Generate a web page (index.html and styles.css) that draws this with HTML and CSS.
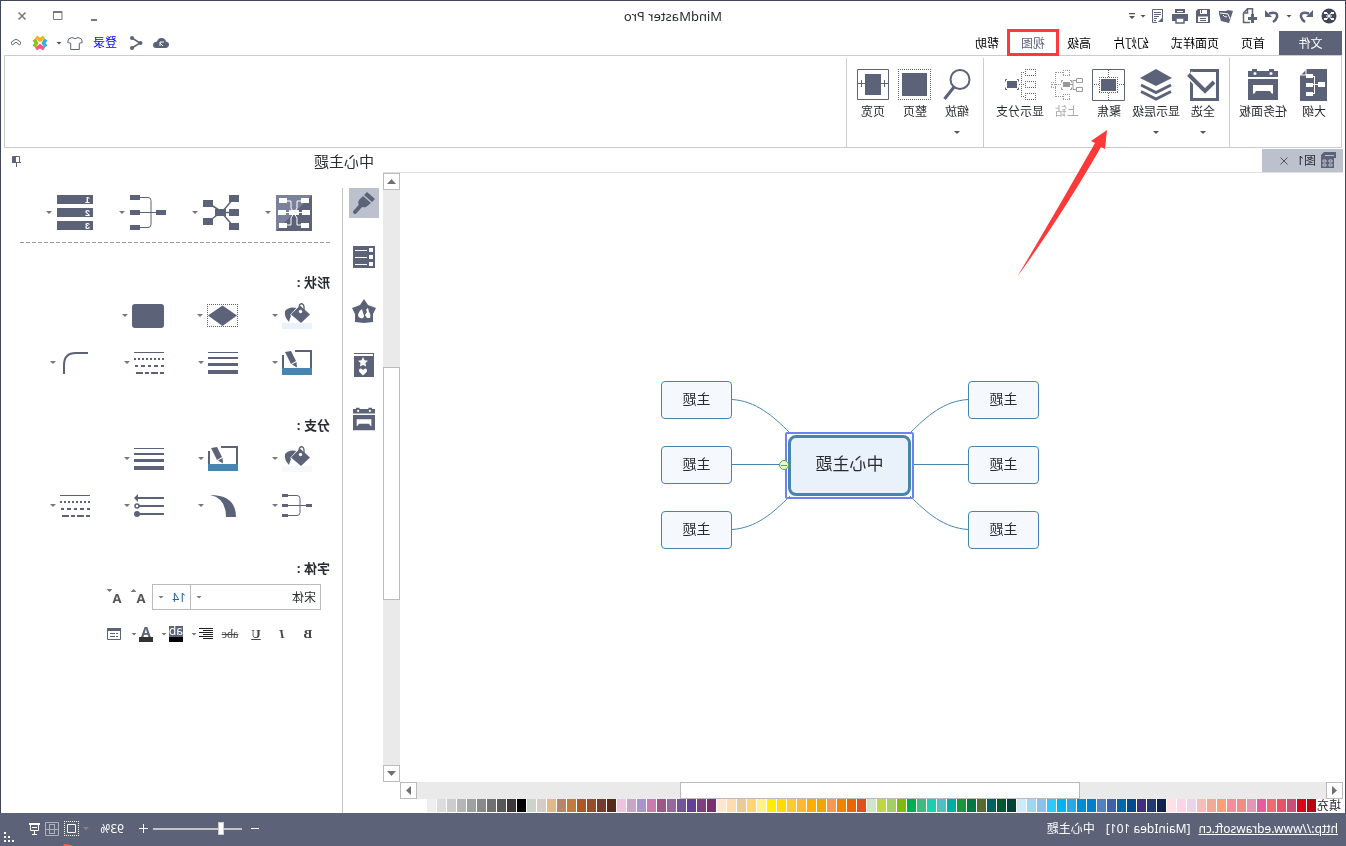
FILE: index.html
```html
<!DOCTYPE html>
<html lang="zh-CN">
<head>
<meta charset="utf-8">
<title>MindMaster Pro</title>
<link rel="stylesheet" href="styles.css">
</head>
<body>
<svg class="defs" aria-hidden="true">
  <symbol id="i-lines" viewBox="0 0 30 24"><path d="M0 1.500h30" stroke-width="1"/><path d="M0 7h30" stroke-width="2"/><path d="M0 13.500h30" stroke-width="3"/><path d="M0 21h30" stroke-width="4"/></symbol>
  <symbol id="i-dashes" viewBox="0 0 30 24"><path d="M0 1.500h30" stroke-width="1"/><path d="M0 8h30" stroke-width="2" stroke-dasharray="2 2"/><path d="M0 15h30" stroke-width="2" stroke-dasharray="3 3 4 3"/><path d="M0 22h30" stroke-width="2" stroke-dasharray="4 2 7 2"/></symbol>
  <symbol id="i-bucket" viewBox="0 0 30 24"><path d="M15 5q8-2 12 3q1 6-4 11q-1-6-5-9z" class="f"/><path d="M12 1L22 12L11 21L0 12z" fill="#fff" stroke="none"/><path d="M12 2.500L21 11.500L11 20L2 11.500z" class="f"/><path d="M8 7V4q0-3 2.500-3.500Q13 1 13 4v3" stroke-width="1.300"/><circle cx="11.500" cy="8.500" r="1.700" fill="#fff" stroke="none"/></symbol>
  <symbol id="i-pen" viewBox="0 0 30 25"><path d="M17 1H1V24M29 5V24" stroke-width="2"/><path d="M21 1l6 1-6 12-5-3z" class="f"/><path d="M15.500 12l4.500 2.500-5 3z" class="f"/><path d="M0 18h30v7H0z" fill="#4585b0" stroke="none"/></symbol>
  <symbol id="i-cal" viewBox="0 0 30 31"><path d="M0 2h4V0h5v2h12V0h5v2h4v6H0zM0 10h30v21H0z" class="f"/><circle cx="7" cy="4.500" r="1.500" fill="#fff" stroke="none"/><circle cx="23" cy="4.500" r="1.500" fill="#fff" stroke="none"/><path d="M5 16h20v9q-2 0-3-3H8q-1 3-3 3z" fill="#fff" stroke="none"/></symbol>
</svg>

<div class="app">
  <div class="frame">
    <header class="titlebar">
      <div class="quick">
        <button class="q" aria-label="MindMaster"><svg width="16" height="16"><circle cx="8" cy="8" r="7.500" fill="#42465a" stroke="none"/><path d="M3 5h3M10 5h3M3 11h3M10 11h3" stroke="#fff" stroke-width="2"/><path d="M6 5l4 6M10 5L6 11M5 8h6" stroke="#fff"/></svg></button>
        <button class="q" aria-label="撤销"><svg width="16" height="16"><path d="M5 5.500Q14 3 13 9q-1 3-4 5" stroke-width="2.500"/><path d="M1 2V9H8z" class="f"/></svg></button>
        <i class="caret"></i>
        <button class="q" aria-label="恢复"><svg width="16" height="16"><path d="M11 5.500Q2 3 3 9q1 3 4 5" stroke-width="2.500"/><path d="M15 2V9H8z" class="f"/></svg></button>
        <button class="q" aria-label="新建"><svg width="16" height="16"><path d="M4.500 7V.750h5L13.500 5V14.500H7M9.500 1V5h4" stroke-width="1.500"/><path d="M0 10.500h9M4.500 6v9" stroke-width="3"/></svg></button>
        <button class="q" aria-label="打开"><svg width="16" height="16"><path d="M1 3l5-1 2 1 7 0v3l-2 7-8 2z" class="f"/><path d="M4 11l2-5 8-1M7 9q3 0 4-2" stroke="#fff"/></svg></button>
        <button class="q" aria-label="保存"><svg width="16" height="16"><path d="M1 1h12l2 2v12H1z" class="f"/><path d="M4 2h7v4H4zM3 8.500h10v5.500H3z" fill="#fff" stroke="none"/><path d="M9.500 2v3M5 10.500h6M5 12.500h6" stroke-width="1"/></svg></button>
        <button class="q" aria-label="打印"><svg width="16" height="16"><path d="M3 1h10v4H3zM0 6h16v7H0z" class="f"/><path d="M4 10h8v5H4z" fill="#fff" stroke="#5c6378" stroke-width="1.500"/><path d="M5 3.500h6" stroke="#fff"/></svg></button>
        <button class="q" aria-label="页面"><svg width="16" height="16"><path d="M2.500 1.500h10v13H8M2.500 1v9M4 4.500h7M4 6.500h7M6 8.500h5M8 10.500h3M9 12.500h2"/><path d="M2 9l5 5H2z" class="f"/></svg></button>
        <i class="caret"></i><i class="caret bar"></i>
      </div>
      <h1>MindMaster Pro</h1>
      <div class="winbtns">
        <button aria-label="最小化"><svg width="12" height="12"><path d="M3 10h6" stroke="#777" stroke-width="2"/></svg></button>
        <button aria-label="最大化"><svg width="12" height="12"><path d="M2 1.500h8.500v8H2z" stroke="#777"/><path d="M2 2h8.500" stroke="#777" stroke-width="2"/></svg></button>
        <button aria-label="关闭"><svg width="12" height="12"><path d="M2.500 2.500l7 7M9.500 2.500l-7 7" stroke="#777" stroke-width="1.500"/></svg></button>
      </div>
    </header>

    <nav class="tabs">
      <button class="file">文件</button>
      <button>首页</button><button>页面样式</button><button>幻灯片</button><button>高级</button><button class="on">视图</button><button>帮助</button>
      <div class="account">
        <button aria-label="云"><svg width="16" height="16"><path d="M3 13Q0 12 0 9.500Q0 7 3 6.500Q4 2.500 8 3q3 0 4 3.500q4 .500 4 3.500t-3 3z" class="f"/><path d="M6 11l3-3M9 11V7H5" stroke="#fff" stroke-width="1"/></svg></button>
        <button class="share" aria-label="分享"><svg width="14" height="16"><path d="M11 3L3 8l8 5" stroke-width="1.500"/><circle cx="11" cy="3" r="2" class="f"/><circle cx="2.500" cy="8" r="2" class="f"/><circle cx="11" cy="13" r="2" class="f"/></svg></button>
        <a href="#login">登录</a>
        <button aria-label="皮肤"><svg width="16" height="16"><path d="M5 2.500L1.500 4 .700 7.500l3 .800V14.500h8.600V8.300l3-.800L14.500 4 11 2.500Q8 5 5 2.500z" stroke-width="1"/></svg></button>
        <i class="caret"></i>
        <button aria-label="主题"><svg width="16" height="16" stroke-width="3.500"><path d="M4 2L8 5l4-3" stroke="#f9b021"/><path d="M4 14L8 11l4 3" stroke="#fa5481"/><path d="M14 4.500L11.500 8l2.500 3.500" stroke="#8cc220"/><path d="M2 4.500L4.500 8 2 11.500" stroke="#37aee3"/></svg></button>
        <button aria-label="收起"><svg width="12" height="12"><path d="M1.500 6.500v-1.500L6 2l4.500 3v1.500L9.500 8 6 5 2.500 8z" stroke-width="1"/></svg></button>
      </div>
      <span class="mark"></span>
    </nav>

    <section class="ribbon">
      <div class="group first">
        <button class="tool"><svg width="27" height="32"><path d="M0 0h20l7 7v25H0z" class="f"/><path d="M21 1v5h5" stroke="#fff"/><path d="M8 15.500h7M12.500 7v17.500M12 7.500h3M12 24.500h3" stroke="#fff" stroke-width="1"/><path d="M2 13h7v5H2zM14 5h7v4h-7zM14 14h7v4h-7zM14 23h7v4h-7z" fill="#fff" stroke="none"/></svg>大纲</button>
        <button class="tool l"><svg width="30" height="32"><use href="#i-cal" width="30" height="31"/></svg>任务面板</button>
      </div>
      <div class="group">
        <button class="tool"><svg width="32" height="32"><path d="M1.500 1.500h26v29h-26z" stroke-width="3"/><path d="M6 14l8 8L30 5" stroke="#fff" stroke-width="8"/><path d="M5 13l9 9L30.500 5.500" stroke-width="4"/></svg>全选<i class="caret"></i></button>
        <button class="tool l"><svg width="32" height="32"><path d="M16 0l16 9-16 8L0 9z" class="f"/><path d="M1 16l15 7.500L31 16M1 22.500L16 30l15-7.500" stroke-width="3"/></svg>显示层级<i class="caret"></i></button>
        <button class="tool"><svg width="33" height="32"><path d="M.500 .500h32v31H.500z"/><path d="M7 8.500h19M7 23.500h19M7.500 8v16M25.500 8v16M16.500 1v7M16.500 24v7M1 15.500h6M26 15.500h7" stroke-dasharray="1 1"/><path d="M9 10h15v12H9z" class="f"/></svg>聚焦</button>
        <button class="tool off"><svg width="32" height="32" class="gray"><path d="M.500 9.500h6v4h-6zM.500 18.500h6v4h-6zM7 11.500h3v9H7M10 15.500h3"/><path d="M13 13h7v5h-7z" class="f"/><path d="M13 1.500h7M13 6.500h7M13.500 1v6M19.500 1v6M13 25.500h7M13 30.500h7M13.500 25v6M19.500 25v6M27 13.500h5M27 18.500h5M31.500 13v6M20 3.500h8M20 27.500h8M27.500 3v25M22 15.500h10" stroke-dasharray="1 1"/><path d="M13 11.500h-1.500v2M20 11.500h1.500v2M13 20.500h-1.500v-2M20 20.500h1.500v-2"/></svg>上钻</button>
        <button class="tool l"><svg width="32" height="32"><path d="M0 .500h11M0 6.500h11M.500 0v7M10.500 0v7M0 12.500h11M0 18.500h11M.500 12v7M10.500 12v7M0 24.500h11M0 30.500h11M.500 24v7M10.500 24v7M12 3.500h4M12 27.500h4M14.500 3v25M12 15.500h5" stroke-dasharray="1 1"/><path d="M19 12h10v7H19z" class="f"/><path d="M19 10.500h-1.500v2M29 10.500h1.500v2M19 20.500h-1.500v-2M29 20.500h1.500v-2"/></svg>显示分支</button>
      </div>
      <div class="group last">
        <button class="tool"><svg width="28" height="32"><circle cx="11" cy="10.500" r="9.500" stroke-width="2"/><path d="M17 18l9.500 12" stroke-width="3"/></svg>缩放<i class="caret"></i></button>
        <button class="tool"><svg width="33" height="32"><path d="M0 .500h33M0 30.500h33M.500 0v31M32.500 0v31" stroke-dasharray="1 1"/><path d="M4 4h25v23H4z" class="f"/></svg>整页</button>
        <button class="tool"><svg width="32" height="32"><path d="M.500 .500h31v30H.500zM0 14.500h32M4.500 11v7M27.500 11v7"/><path d="M8 5h16v21H8z" class="f"/></svg>页宽</button>
      </div>
    </section>

    <div class="body">
      <main class="work">
        <div class="doctabs">
          <div class="doctab">
            <svg width="16" height="17"><path d="M0 2V0h12l3 3v13H2V6H0z" class="f"/><path d="M2 3.500h9M4 8h3v2H4zM10 8h3v2h-3zM4 12h3v2H4zM10 12h3v2h-3z" stroke="#bdc1cd"/></svg>
            <span>图1</span>
            <button aria-label="关闭"><svg width="10" height="10"><path d="M1.500 1.500l7 7M8.500 1.500l-7 7" stroke="#555"/></svg></button>
          </div>
        </div>
        <div class="canvas">
          <div class="map">
            <svg class="links" width="378" height="168"><path d="M71 18.500C95 20 112 35 129 52M71 83.500h56M71 148.500C95 147 112 132 129 115M307 18.500C283 20 266 35 249 52M307 83.500h-56M307 148.500C283 147 266 132 249 115"/></svg>
            <div class="topic a">主题</div><div class="topic b">主题</div><div class="topic c">主题</div>
            <div class="topic d">主题</div><div class="topic e">主题</div><div class="topic g">主题</div>
            <div class="select-box"><div class="root">中心主题</div></div>
            <button class="fold" aria-label="折叠"></button>
          </div>
        </div>
        <div class="vbar"><button aria-label="向上"><svg width="9" height="5"><path d="M4.500 0L9 5H0z"/></svg></button><div class="gap1"></div><div class="thumb"></div><div class="gap2"></div><button aria-label="向下"><svg width="9" height="5"><path d="M0 0h9L4.500 5z"/></svg></button></div>
        <div class="hbar"><button aria-label="向左"><svg width="5" height="9"><path d="M0 4.500L5 0v9z"/></svg></button><div class="gap1"></div><div class="thumb"></div><div class="gap2"></div><button aria-label="向右"><svg width="5" height="9"><path d="M5 4.500L0 0v9z"/></svg></button></div>
        <div class="palette"><span>填充</span><div class="swatches" id="swatches"></div></div>
      </main>

      <aside class="side">
        <div class="side-head"><h2>中心主题</h2><button aria-label="固定"><svg width="12" height="12"><path d="M2.500 1.500h7v6h-7z"/><path d="M6 1h3v6H6z" class="f"/><path d="M1 7.500h9M5.500 7v5" stroke-width="1"/></svg></button></div>
        <div class="side-main">
          <div class="strip">
            <button class="on" aria-label="格式"><svg width="26" height="26"><path d="M2 9l8-7 3 3-8 7zM6 13l8-7 4 4q2 4-1 6t-6 1z" class="f"/><path d="M14 13l8 9" stroke-width="4" stroke-linecap="round"/></svg></button>
            <button aria-label="大纲"><svg width="22" height="22"><path d="M0 0h22v22H0z" class="f"/><path d="M2 2h4v4H2zM2 9h4v4H2zM2 16h4v4H2z" fill="#fff" stroke="none"/><path d="M8 4.500h12M8 11.500h12M8 18.500h12" stroke="#fff"/></svg></button>
            <button aria-label="图标"><svg width="24" height="24"><path d="M12 0l4 6 8 3-3 6v8l-9 1-9-1v-8L0 9l8-3z" class="f"/><path d="M8 9q3 1 1 4l2 3-2 3H6q-1-4 1-6zM14 10q4 3 4 7-2 3-5 2-2-2 0-5z" fill="#fff" stroke="none"/></svg></button>
            <button aria-label="剪贴画"><svg width="20" height="24"><path d="M0 .500h20M.500 0v4"/><path d="M0 3h20v21H0z" class="f"/><path d="M11 4l1.500 3.300 3.500.400-2.600 2.400.700 3.500L11 12l-3.100 1.600.700-3.500L6 7.700l3.500-.400zM11 22.500l-4-4q-.500-3 2-3l2 1.500 2-1.500q2.500 0 2 3z" fill="#fff" stroke="none"/></svg></button>
            <button aria-label="任务"><svg width="22" height="24"><use href="#i-cal" width="22" height="24"/></svg></button>
          </div>
          <div class="panel">
            <div class="layouts">
              <button><svg width="36" height="36"><path d="M0 0h36v36H0z" class="f"/><path d="M36 0v36L0 0z" fill="#7c819b" stroke="none"/><path d="M8 6h7v7l3 5M28 6h-7v7l-3 5M4 17.500h28M8 30h7v-7l3-5M28 30h-7v-7l-3-5" stroke="#fff"/><path d="M3 3h8v5H3zM25 3h8v5h-8zM2 15h8v5H2zM26 15h8v5h-8zM3 28h8v5H3zM25 28h8v5h-8zM13 15h10v5H13z" fill="#fff" stroke="none"/></svg><i class="caret"></i></button>
              <button><svg width="36" height="36"><path d="M5 3l12 14L31 8M5 32l13-15 13 10M5 17.500h13" stroke-width="1.500"/><path d="M0 0h10v7H0zM0 14h10v7H0zM0 28h10v7H0zM26 5h10v7H26zM26 23h10v7H26zM13 14h11v7H13z" class="f"/></svg><i class="caret"></i></button>
              <button><svg width="36" height="36"><path d="M5 17.500h25M27 2.500h-9q-3 0-3 3v24q0 3 3 3h9"/><path d="M0 15h10v5H0zM26 0h10v5H26zM26 15h10v5H26zM26 30h10v5H26z" class="f"/></svg><i class="caret"></i></button>
              <button><svg width="36" height="36"><path d="M0 0h36v9H0zM0 13h36v9H0zM0 26h36v9H0z" class="f"/><g class="num"><text x="3" y="8">1</text><text x="3" y="21">2</text><text x="3" y="34">3</text></g></svg><i class="caret"></i></button>
            </div>

            <h3>形状 :</h3>
            <div class="tiles">
              <button><span class="fill light"><svg width="30" height="20"><use href="#i-bucket" width="30" height="24"/></svg></span><i class="caret"></i></button>
              <button><svg width="31" height="24"><path d="M0 .500h31M0 22.500h31M.500 0v23M30.500 0v23" stroke-dasharray="1 1"/><path d="M15.500 1.500L30 11.500 15.500 22 1 11.500z" class="f"/></svg><i class="caret"></i></button>
              <button><svg width="32" height="24"><rect width="32" height="24" rx="3" class="f"/></svg><i class="caret"></i></button>
              <span></span>
              <button><svg width="30" height="25"><use href="#i-pen" width="30" height="25"/></svg><i class="caret"></i></button>
              <button><svg width="30" height="24"><use href="#i-lines" width="30" height="24"/></svg><i class="caret"></i></button>
              <button><svg width="30" height="24"><use href="#i-dashes" width="30" height="24"/></svg><i class="caret"></i></button>
              <button><svg width="30" height="24"><path d="M2 2h12q12 0 12 12v9" stroke-width="2"/></svg><i class="caret"></i></button>
            </div>

            <h3>分支 :</h3>
            <div class="tiles">
              <button><span class="fill pale"><svg width="30" height="20"><use href="#i-bucket" width="30" height="24"/></svg></span><i class="caret"></i></button>
              <button><svg width="30" height="25"><use href="#i-pen" width="30" height="25"/></svg><i class="caret"></i></button>
              <button><svg width="30" height="24"><use href="#i-lines" width="30" height="24"/></svg><i class="caret"></i></button>
              <span></span>
              <button><svg width="30" height="24"><path d="M3 11.500h24M26 1.500H15q-3 0-3 3v14q0 3 3 3h11"/><path d="M0 10h6v3H0zM24 0h6v3h-6zM24 10h6v3h-6zM24 20h6v3h-6z" class="f"/></svg><i class="caret"></i></button>
              <button><svg width="30" height="24"><path d="M28 1Q2 1 2 23h10Q12 4 28 1z" class="f"/></svg><i class="caret"></i></button>
              <button><svg width="30" height="24"><path d="M0 4h27M0 12h25M0 20h27" stroke-width="2"/><path d="M30 4l-4-4v8z" class="f"/><circle cx="27" cy="12" r="2" fill="#fff" stroke-width="1.500"/><circle cx="27" cy="20" r="3" class="f"/></svg><i class="caret"></i></button>
              <button><svg width="30" height="24"><use href="#i-dashes" width="30" height="24"/></svg><i class="caret"></i></button>
            </div>

            <h3>字体 :</h3>
            <div class="fonts">
              <label class="combo wide"><select aria-label="字体"><option>宋体</option></select><i class="caret"></i></label>
              <label class="combo"><select class="size" aria-label="字号"><option>14</option></select><i class="caret"></i></label>
              <button class="grow" aria-label="增大字号">A<i class="caret up"></i></button>
              <button class="grow" aria-label="减小字号">A<i class="caret"></i></button>
            </div>
            <div class="format">
              <button class="s"><b>B</b></button><button class="s"><em>I</em></button><button class="s"><u>U</u></button><button class="s"><s>abc</s></button>
              <button class="w" aria-label="对齐"><svg width="14" height="12"><path d="M0 .500h14M0 2.500h10M0 4.500h14M0 6.500h10M0 8.500h14M0 10.500h10" stroke="#222"/></svg><i class="caret"></i></button>
              <button class="w"><span class="hl">ab</span><i class="caret"></i></button>
              <button class="w"><span class="fc">A</span><i class="caret"></i></button>
              <button aria-label="列表"><svg width="14" height="12"><path d="M.500 .500h13v11H.500z"/><path d="M0 0h14v3H0z" class="f"/><path d="M3 5.500h2M6 5.500h5M3 8.500h2M6 8.500h5"/></svg></button>
            </div>
          </div>
        </div>
      </aside>
    </div>
    <svg class="arrow" width="92" height="150"><path d="M1 0L17 11 13 13Q52 82 91 147Q46 85 7 17L3 19z"/></svg>
  </div>

  <footer class="status">
    <a href="http://www.edrawsoft.cn">http://www.edrawsoft.cn</a><span>[MainIdea 101]</span><span class="name">中心主题</span>
    <div class="zoom">
      <button aria-label="缩小"><svg width="8" height="9"><path d="M0 4.500h8"/></svg></button>
      <input type="range" min="0" max="100" value="22" aria-label="缩放">
      <button aria-label="放大"><svg width="9" height="9"><path d="M0 4.500h9M4.500 0v9"/></svg></button>
      <output>93%</output>
      <i class="caret"></i>
      <button aria-label="整页"><svg width="15" height="15"><path d="M0 .500h15M0 14.500h15M.500 0v15M14.500 0v15" stroke-dasharray="1 1"/><path d="M3.500 3.500h8v8h-8z"/></svg></button>
      <button class="dim" aria-label="页宽"><svg width="14" height="14"><path d="M.500 .500h13v13H.500zM4.500 2v10M9.500 2v10M1 7.500h12M4 2.500h6M4 11.500h6"/></svg></button>
      <button aria-label="放映"><svg width="11" height="12"><path d="M0 1h11" stroke-width="2"/><path d="M1.500 1v6.500h8V1M3 4.500h5M5.500 7v4M3 11.500h5"/></svg></button>
      <svg class="grip" width="10" height="10"><path d="M8 0h2v2H8zM8 4h2v2H8zM4 4h2v2H4zM0 8h2v2H0zM4 8h2v2H4zM8 8h2v2H8z"/></svg>
    </div>
    <svg class="spark" width="10" height="2"><path d="M0 2Q4 0 9 0l1 2z"/></svg>
  </footer>
</div>
<script src="script.js"></script>
</body>
</html>
```

FILE: styles.css
```css
* { box-sizing: border-box; }

:root {
  --ink: #5c6378;
  --edge: #42465a;
  --line: #cccccc;
  --blue: #4585b0;
}

body {
  margin: 0;
  overflow: hidden;
  background: #fff;
  color: #2a2c34;
  font: 12px/16px "Noto Sans", "Noto Sans CJK SC", sans-serif;
}

button {
  display: flex;
  align-items: center;
  justify-content: center;
  padding: 0;
  border: 0;
  background: none;
  color: inherit;
  font: inherit;
}

h1, h2, h3 { margin: 0; font-size: 12px; font-weight: 400; }

svg { display: block; flex: none; fill: none; stroke: var(--ink); overflow: visible; }
.f { fill: var(--ink); stroke: none; }
.defs { position: absolute; width: 0; height: 0; }

/* The whole interface is shown as a mirror image */
.app {
  display: flex;
  flex-direction: column;
  height: 100vh;
  transform: scaleX(-1);
}

.frame {
  position: relative;
  display: flex;
  flex: 1;
  flex-direction: column;
  min-height: 0;
  border: 1px solid var(--edge);
  border-bottom: 0;
}

.caret {
  flex: none;
  width: 6px;
  height: 3px;
  background: #555;
  clip-path: polygon(0 0, 100% 0, 50% 100%);
}
.caret.up { clip-path: polygon(50% 0, 100% 100%, 0 100%); }
.caret.bar { height: 6px; clip-path: polygon(0 0, 100% 0, 100% 20%, 0 20%, 0 50%, 100% 50%, 50% 100%, 0 50%); }

/* title bar */
.titlebar {
  display: grid;
  grid-template-columns: 1fr auto 1fr;
  align-items: center;
  height: 30px;
}
.titlebar h1 { font-size: 13px; }
.quick { display: flex; align-items: center; padding-left: 8px; gap: 7px; }
.quick .caret { margin: 0 -1px; }
.quick .caret:nth-last-child(2) { margin-left: -4px; }
.winbtns { display: flex; justify-content: flex-end; gap: 24px; padding-right: 15px; }

/* tabs */
.tabs { position: relative; display: flex; height: 24px; padding-left: 3px; }
.tabs > button { padding: 1px 11px 0; color: #000; }
.tabs .file { width: 63px; margin-right: 3px; background: var(--ink); color: #fff; }
.tabs .on { color: var(--ink); }
.mark {
  position: absolute;
  left: 286px;
  top: -2px;
  width: 52px;
  height: 27px;
  border: 3px solid #fd3a39;
}
.account { display: flex; align-items: center; gap: 10px; margin-left: auto; padding-right: 9px; }
.account a { color: #00f; text-decoration: none; }
.account .caret { margin: 0 -2px 0 -5px; }
.account .share { margin-right: 2px; }

/* ribbon */
.ribbon { display: flex; height: 93px; margin: 0 3px; border: 1px solid var(--line); }
.group { display: flex; margin-top: 2px; padding: 11px 10px 0 5px; border-right: 1px solid var(--line); }
.group.first { gap: 4px; padding-left: 6px; padding-right: 7px; }
.group.last { padding-right: 5px; }
.tool { flex-direction: column; justify-content: flex-start; width: 42px; white-space: nowrap; }
.tool.l { width: 52px; }
.tool svg { margin-bottom: 3px; }
.tool .caret { margin-top: 11px; }
.off { color: #aaa; }
.gray { stroke: #999; }
.gray .f { fill: #999; }

/* work area */
.body { display: flex; flex: 1; min-height: 0; }
.work {
  display: grid;
  flex: 1;
  grid-template: 25px 1fr 17px 14px / 1fr 17px;
  min-width: 0;
  padding-left: 2px;
}
.doctabs { grid-column: 1 / -1; padding-top: 1px; border-bottom: 1px solid #e0e0e0; }
.doctab {
  display: flex;
  align-items: center;
  width: 81px;
  height: 23px;
  padding-left: 7px;
  gap: 4px;
  background: #bdc1cd;
}
.doctab button { margin-left: 4px; }
.canvas { position: relative; overflow: hidden; }

.map { position: absolute; left: 304px; top: 208px; width: 378px; height: 168px; }
.links { position: absolute; stroke: var(--blue); }
.topic {
  position: absolute;
  width: 71px;
  height: 38px;
  border: 1px solid var(--blue);
  border-radius: 4px;
  background: #f5f9fe;
  font-size: 14px;
  line-height: 34px;
  text-align: center;
}
.a, .b, .c { left: 0; }
.d, .e, .g { right: 0; }
.a, .d { top: 0; }
.b, .e { top: 65px; }
.c, .g { top: 130px; }
.select-box {
  position: absolute;
  left: 125px;
  top: 51px;
  width: 129px;
  height: 67px;
  padding: 1px;
  border: 2px solid #6a86ee;
  border-radius: 2px;
}
.root {
  height: 61px;
  border: 3px solid var(--blue);
  border-radius: 8px;
  background: #e9f1fb;
  font-size: 17px;
  line-height: 52px;
  text-align: center;
}
.fold {
  position: absolute;
  left: 250px;
  top: 79px;
  width: 10px;
  height: 10px;
  border: 1px solid #61ad2b;
  border-radius: 50%;
  background: linear-gradient(#61ad2b, #61ad2b) center / 6px 1px no-repeat #e6f5dc;
}

/* scroll bars */
.vbar, .hbar { display: flex; background: #eaeaea; }
.vbar { flex-direction: column; }
.hbar { grid-column: 1; }
.vbar button, .hbar button { width: 17px; height: 17px; border: 1px solid #bbb; background: #fff; flex: none; }
.vbar svg, .hbar svg { fill: #707070; stroke: none; }
.thumb { border: 1px solid #bbb; background: #fff; }
.vbar .gap1 { flex: 177; }
.vbar .thumb { flex: 231; }
.vbar .gap2 { flex: 165; }
.hbar .gap1 { flex: 246; }
.hbar .thumb { flex: 398; }
.hbar .gap2 { flex: 263; }

.palette { display: flex; grid-column: 1 / -1; padding-left: 2px; gap: 1px; line-height: 14px; }
.swatches { display: flex; gap: 1px; }
.swatches button { width: 9px; height: 13px; }

/* side panel */
.side { display: flex; flex-direction: column; width: 382px; }
.side-head { display: flex; justify-content: space-between; align-items: center; height: 26px; margin-bottom: 14px; padding: 0 9px; }
.side-head h2 { font-size: 15px; }
.side-main { display: flex; flex: 1; }
.strip { display: flex; flex: none; flex-direction: column; gap: 24px; width: 41px; padding-left: 4px; border-right: 1px solid #c4c4c4; }
.strip button { width: 30px; height: 30px; }
.strip .on { background: #bdc1cd; }
.panel { flex: 1; min-width: 0; padding: 0 18px 0 12px; }
.layouts {
  display: flex;
  height: 55px;
  margin-bottom: 31px;
  padding: 6px 0 12px 18px;
  background: repeating-linear-gradient(90deg, #999 0 4px, transparent 4px 6px) bottom / 100% 1px no-repeat;
}
.layouts button { flex: none; justify-content: flex-start; width: 73px; gap: 5px; }
.num { fill: #fff; stroke: none; font: bold 9px "Liberation Sans", sans-serif; }
h3 { height: 18px; font-size: 13px; line-height: 17px; font-weight: 700; }
.tiles {
  display: grid;
  grid-template-columns: repeat(4, 74px);
  grid-auto-rows: 47px;
  margin-bottom: 31px;
  padding-left: 18px;
}
.tiles button { justify-content: flex-start; gap: 4px; }
.panel .caret { background: #777; }
.fill { width: 30px; height: 26px; }
.light { border-bottom: 6px solid #e9f1fb; }
.pale { border-bottom: 6px solid #f5f9fe; }

.fonts { display: flex; height: 26px; margin: 6px 0 12px 9px; }
.combo { display: flex; align-items: center; width: 39px; margin-right: -1px; padding-right: 5px; border: 1px solid #bbb; }
.combo.wide { width: 131px; }
.combo select {
  flex: 1;
  min-width: 0;
  height: 24px;
  padding: 2px 0 0 4px;
  border: 0;
  outline: 0;
  appearance: none;
  background: #fff;
  color: #2a2c34;
  font: inherit;
}
.combo .size { color: #2a64a0; }
.grow { width: 24px; padding: 2px 0 0 6px; color: #555; font-weight: 700; font-size: 13px; }
.grow .caret { align-self: flex-start; margin-top: 3px; }

.format { display: flex; height: 24px; margin-left: 9px; color: #444; }
.format button { width: 26px; }
.format .w { width: 30px; gap: 2px; }
.format .s { font: 13px/16px "Liberation Serif", serif; }
.format em { font-weight: 700; }
.format u { font-weight: 700; }
.format s { font-size: 12px; }
.hl { width: 14px; height: 16px; border-bottom: 5px solid #000; background: var(--ink); color: #fff; line-height: 10px; text-align: center; }
.fc { width: 14px; height: 16px; border-bottom: 5px solid #333; color: var(--ink); font-weight: 700; font-size: 14px; line-height: 11px; text-align: center; }

/* red pointer drawn over the ribbon and the canvas */
.arrow { position: absolute; left: 237px; top: 129px; fill: #fd3a39; stroke: none; pointer-events: none; }

/* status bar */
.status {
  position: relative;
  display: flex;
  align-items: center;
  height: 33px;
  padding: 0 4px 2px 8px;
  gap: 8px;
  background: var(--ink);
  color: #fff;
}
.status a { color: #fff; }
.status .name { margin-left: 3px; }
.status svg { stroke: #fff; }
.zoom { display: flex; align-items: center; margin-left: auto; gap: 5px; }
.zoom input {
  width: 89px;
  height: 13px;
  margin: 0 0 0 4px;
  appearance: none;
  background: linear-gradient(#c4c4c4, #c4c4c4) center / 100% 2px no-repeat;
}
.zoom input::-webkit-slider-thumb { appearance: none; width: 6px; height: 13px; border: 1px solid #ccc; background: #fff; }
.zoom output { width: 26px; margin: 0 4px 0 10px; }
.zoom .caret { background: #878787; margin-right: -1px; }
.dim { opacity: .5; }
.status .grip { align-self: flex-end; margin-left: 10px; margin-bottom: -5px; fill: #fff; stroke: none; }
.status .spark { position: absolute; right: 63px; bottom: 0; fill: #f0683c; stroke: none; }
```

FILE: script.js
```js
const colors = `b50714 d9061b c94f78 e85265 ec6d71 e75d9b e197b5 ee8e87 f1909b ff9f7a f0ab96 f6bdbb ead4e7 ffd4e6 ffe1e6
11224f 213a6f 412e7c 034a91 0067a8 3f61ae 5580c0 0080cc 008dd0 2ca7e0 00b2f0 30c7fb 8bc1ea 9ed8ef ceebf7
004236 005730 006360 566b30 007a45 1e9440 00ada0 51bfc1 1bceb2 44b97f 00ae52 80b910 a3d063 bfd742 cde7c8
e34e1e eb6500 f28100 f29954 f0a600 ffae00 ffb735 faca32 ffda00 ffec00 fdf388 ffd573 eacb97 ffdcae ffe8d0
782f70 803e82 643f96 745399 97679f 9d5889 cb7bb0 a994d0 c6a6c9 edc3dd
572a19 743c2e 944f2a ab5727 c37a40 b5866c dfb987 d4ccc6 cbd3ca
000000 403738 585858 707070 888988 9fa0a0 b4b5b5 cccccc dcdcdc eeeeee`.split(/\s+/);

const swatches = document.getElementById("swatches");
for (const color of colors) {
  const swatch = document.createElement("button");
  swatch.style.background = "#" + color;
  swatch.setAttribute("aria-label", "#" + color);
  swatches.append(swatch);
}
```
